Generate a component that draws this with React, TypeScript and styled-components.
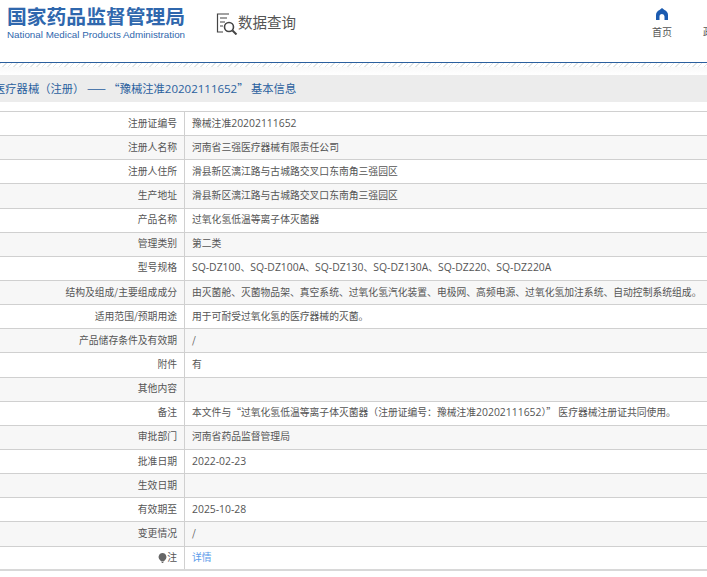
import styled, { createGlobalStyle } from "styled-components";

const GlobalStyle = createGlobalStyle`
  html, body {
    margin: 0;
    padding: 0;
    background: #fff;
    overflow: hidden;
  }
`;

const Page = styled.div`
  width: 707px;
  height: 577px;
  overflow: hidden;
  font-family: "Noto Sans CJK SC", "Liberation Sans", sans-serif;
  color: #555;
`;
const Header = styled.div`
  height: 62px;
  display: flex;
  align-items: flex-start;
  border-bottom: 1px solid #2a5f9e;
`;
const Logo = styled.div`
  margin: 4px 0 0 7px;
  width: 180px;
  flex: none;
`;
const LogoTitle = styled.div`
  font-size: 19.8px;
  line-height: 24px;
  font-weight: 700;
  color: #2f67ad;
  white-space: nowrap;
`;
const LogoSub = styled.div`
  font-family: "Liberation Sans", sans-serif;
  font-size: 9.8px;
  line-height: 12px;
  margin-top: 1px;
  color: #2f67ad;
  white-space: nowrap;
`;
const Query = styled.div`
  margin: 13px 0 0 29px;
  display: flex;
  align-items: flex-start;
  font-size: 14.5px;
  line-height: 18px;
  color: #555;
`;
const HomeLink = styled.div`
  margin: 8px 0 0 auto;
  width: 22px;
  display: flex;
  flex-direction: column;
  align-items: center;
  gap: 5px;
  font-size: 10px;
  line-height: 14px;
  color: #555;
`;
const NextLink = styled.div`
  margin: 25px 0 0 0;
  width: 34px;
  padding-left: 30px;
  box-sizing: border-box;
  flex: none;
  overflow: hidden;
  font-size: 10px;
  line-height: 14px;
  white-space: nowrap;
  color: #555;
`;
const Hatch = styled.div`
  height: 12px;
  background:
    repeating-linear-gradient(135deg, #e2e6e6 0 1px, #fff 1px 4px) top / 100% 4px no-repeat,
    linear-gradient(#f6f6f6, #fff);
`;
const TitleBar = styled.div`
  height: 27px;
  margin-bottom: 9px;
  background: #ececec;
  color: #2a5f9e;
  font-size: 11.3px;
  line-height: 27px;
  overflow: hidden;
  white-space: nowrap;
`;
const TitleText = styled.div`
  margin-left: -6px;
`;
const TitleLatin = styled.span`
  font-family: "Open Sans", sans-serif;
  font-size: 11.5px;
`;
const Sheet = styled.table`
  width: 707px;
  table-layout: fixed;
  border-collapse: collapse;
  border-top: 1px solid #d0d0d0;
  border-bottom: 2px solid #d8d8d8;
  font-size: 9.8px;
`;
const Row = styled.tr<{ $alt: boolean }>`
  height: 24.15px;
  background: ${(props) => (props.$alt ? "#f7f7f7" : "#fff")};
  border-bottom: 1px solid #d0d0d0;
`;
const Label = styled.td`
  width: 177px;
  padding: 0 7px 2px 0;
  text-align: right;
  border-right: 1px solid #d0d0d0;
  white-space: nowrap;
`;
const Value = styled.td`
  padding: 0 0 2px 7px;
  white-space: nowrap;
  overflow: hidden;
`;
const Latin = styled.span`
  font-family: "Open Sans", sans-serif;
  font-size: 10.4px;
`;
const DetailLink = styled.a`
  color: #5b9bea;
`;
const Bulb = styled.svg`
  vertical-align: -2px;
`;

const rows: [string, string][] = [
  ["注册证编号", "豫械注准20202111652"],
  ["注册人名称", "河南省三强医疗器械有限责任公司"],
  ["注册人住所", "滑县新区漓江路与古城路交叉口东南角三强园区"],
  ["生产地址", "滑县新区漓江路与古城路交叉口东南角三强园区"],
  ["产品名称", "过氧化氢低温等离子体灭菌器"],
  ["管理类别", "第二类"],
  ["型号规格", "SQ-DZ100、SQ-DZ100A、SQ-DZ130、SQ-DZ130A、SQ-DZ220、SQ-DZ220A"],
  ["结构及组成/主要组成成分", "由灭菌舱、灭菌物品架、真空系统、过氧化氢汽化装置、电极网、高频电源、过氧化氢加注系统、自动控制系统组成。"],
  ["适用范围/预期用途", "用于可耐受过氧化氢的医疗器械的灭菌。"],
  ["产品储存条件及有效期", "/"],
  ["附件", "有"],
  ["其他内容", ""],
  ["备注", "本文件与“过氧化氢低温等离子体灭菌器（注册证编号：豫械注准20202111652）” 医疗器械注册证共同使用。"],
  ["审批部门", "河南省药品监督管理局"],
  ["批准日期", "2022-02-23"],
  ["生效日期", ""],
  ["有效期至", "2025-10-28"],
  ["变更情况", "/"],
];

// latin runs are a bit larger than the cjk text around them
const mixed = (text: string) =>
  text.split(/([A-Za-z0-9-]+)/).map((part, i) => (i % 2 ? <Latin key={i}>{part}</Latin> : part));

export default function App() {
  return (
    <Page>
      <GlobalStyle />
      <Header>
        <Logo>
          <LogoTitle>国家药品监督管理局</LogoTitle>
          <LogoSub>National Medical Products Administration</LogoSub>
        </Logo>
        <Query>
          <svg width="22" height="22" viewBox="0 0 22 22" fill="none" stroke="#444">
            <path d="M13 1H1.500v18H7" strokeWidth="1.200" />
            <path d="M4 5h7M4 9h5M4 13h3" strokeWidth="1.200" />
            <circle cx="13" cy="14" r="4.500" strokeWidth="1.600" />
            <path d="M16.500 17.500l4 4" strokeWidth="2" />
          </svg>
          数据查询
        </Query>
        <HomeLink>
          <svg width="14" height="12" viewBox="0 0 14 12">
            <path
              fillRule="evenodd"
              fill="#1c5bb0"
              d="M7 0l2.500 2C11.500 3 13 4.500 13 7v5H9.500V8.500a2.500 2.500 0 0 0-5 0V12H1V7c0-2.500 1.500-4 3.500-5z"
            />
          </svg>
          <span>首页</span>
        </HomeLink>
        <NextLink>政务</NextLink>
      </Header>
      <Hatch />
      <TitleBar>
        <TitleText>
          医疗器械（注册） —— “豫械注准<TitleLatin>20202111652</TitleLatin>” 基本信息
        </TitleText>
      </TitleBar>
      <Sheet>
        <tbody>
          {rows.map(([label, value], i) => (
            <Row key={label} $alt={i % 2 === 1}>
              <Label>{label}</Label>
              <Value>{mixed(value)}</Value>
            </Row>
          ))}
          <Row $alt={false}>
            <Label>
              <Bulb width="9" height="10" viewBox="0 0 9 10">
                <path fill="#666" d="M4.500 0a4 4 0 0 1 2 7.400V8h-4v-.6A4 4 0 0 1 4.500 0zM3 8.600h3L5 10H4z" />
              </Bulb>
              注
            </Label>
            <Value>
              <DetailLink>详情</DetailLink>
            </Value>
          </Row>
        </tbody>
      </Sheet>
    </Page>
  );
}
